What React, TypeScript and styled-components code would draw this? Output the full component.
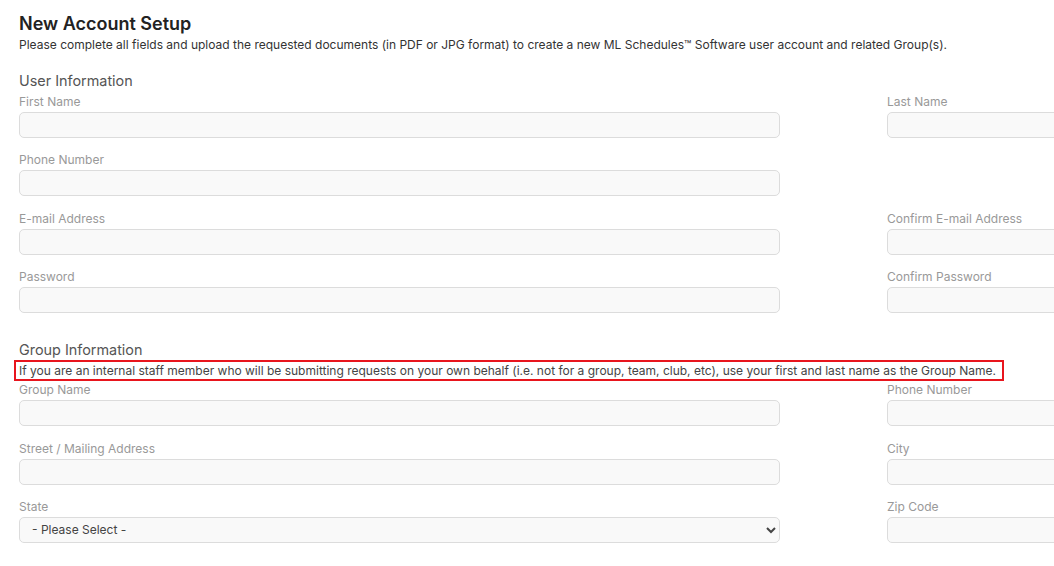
import React from "react";
import styled, { createGlobalStyle } from "styled-components";

const Global = createGlobalStyle`
  html, body { margin: 0; padding: 0; background: #fff; overflow: hidden; }
  body { font-family: Inter, "Noto Sans", "Liberation Sans", sans-serif; }
  * { box-sizing: border-box; }
`;

const Page = styled.div`
  width: 1649px;
  padding: 13px 0 0 19px;
`;

const Title = styled.h1`
  margin: 0;
  font-size: 18px;
  line-height: 22px;
  font-weight: 600;
  color: #222;
`;

const Intro = styled.p`
  margin: 1px 0 0;
  font-size: 12px;
  line-height: 18px;
  color: #333;
`;

const SectionTitle = styled.h2<{ $top: number }>`
  margin: ${(p) => p.$top}px 0 0;
  font-size: 14.4px;
  line-height: 18px;
  font-weight: 400;
  color: #555;
`;

const Help = styled.p`
  display: inline-block;
  margin: -2px 0 0 -5px;
  padding: 0 6px 0 3px;
  border: 2px solid #e8151d;
  font-size: 12px;
  line-height: 17px;
  color: #444;
`;

const Grid = styled.div<{ $top: number }>`
  display: grid;
  grid-template-columns: 761px 761px;
  column-gap: 107px;
  row-gap: 14.4px;
  margin-top: ${(p) => p.$top}px;
`;

const Field = styled.div<{ $empty?: boolean }>`
  display: flex;
  flex-direction: column;
  visibility: ${(p) => (p.$empty ? "hidden" : "visible")};
`;

const Label = styled.label`
  font-size: 12px;
  line-height: 16px;
  color: #999;
  margin-bottom: 2px;
`;

const Input = styled.input`
  height: 26px;
  width: 100%;
  border: 1px solid #dcdcdc;
  border-radius: 5px;
  background: #f9f9f9;
  font-family: inherit;
  font-size: 12px;
  padding: 0 10px;
  outline: none;
`;

const Select = styled.select`
  height: 26px;
  width: 100%;
  border: 1px solid #dcdcdc;
  border-radius: 5px;
  background: #f9f9f9;
  font-family: inherit;
  font-size: 12px;
  color: #444;
  padding: 0 6px 0 8px;
  outline: none;
`;

const TextField = ({ label, type = "text" }: { label: string; type?: string }) => (
  <Field>
    <Label>{label}</Label>
    <Input type={type} />
  </Field>
);

export default function App() {
  return (
    <>
      <Global />
      <Page>
        <Title>New Account Setup</Title>
        <Intro>
          Please complete all fields and upload the requested documents (in PDF or JPG format) to create a new ML
          Schedules™ Software user account and related Group(s).
        </Intro>

        <SectionTitle $top={18}>User Information</SectionTitle>
        <Grid $top={4}>
          <TextField label="First Name" />
          <TextField label="Last Name" />
          <TextField label="Phone Number" />
          <Field $empty />
          <TextField label="E-mail Address" type="email" />
          <TextField label="Confirm E-mail Address" type="email" />
          <TextField label="Password" type="password" />
          <TextField label="Confirm Password" type="password" />
        </Grid>

        <SectionTitle $top={28}>Group Information</SectionTitle>
        <Help>
          If you are an internal staff member who will be submitting requests on your own behalf (i.e. not for a
          group, team, club, etc), use your first and last name as the Group Name.
        </Help>
        <Grid $top={1}>
          <TextField label="Group Name" />
          <TextField label="Phone Number" />
          <TextField label="Street / Mailing Address" />
          <TextField label="City" />
          <Field>
            <Label>State</Label>
            <Select defaultValue="">
              <option value="">- Please Select -</option>
              <option value="AL">Alabama</option>
              <option value="AK">Alaska</option>
            </Select>
          </Field>
          <TextField label="Zip Code" />
        </Grid>
      </Page>
    </>
  );
}
